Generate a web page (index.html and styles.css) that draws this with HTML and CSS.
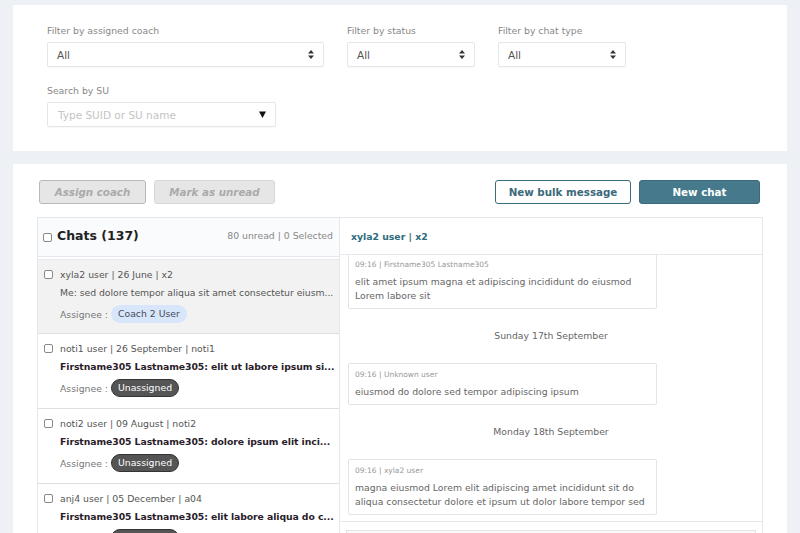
FILE: index.html
```html
<!DOCTYPE html>
<html lang="en">
<head>
    <meta charset="UTF-8">
    <title>Chats</title>
    <link rel="stylesheet" href="styles.css">
</head>
<body>
<div class="card filters">
    <div class="filter-row">
        <div class="field">
            <label>Filter by assigned coach</label>
            <div class="select wide"><span>All</span><svg class="updown" width="6" height="9" viewBox="0 0 6 9"><path d="M3 0L6 3.5H0Z M3 9L6 5.5H0Z" fill="#333"/></svg></div>
        </div>
        <div class="field">
            <label>Filter by status</label>
            <div class="select"><span>All</span><svg class="updown" width="6" height="9" viewBox="0 0 6 9"><path d="M3 0L6 3.5H0Z M3 9L6 5.5H0Z" fill="#333"/></svg></div>
        </div>
        <div class="field">
            <label>Filter by chat type</label>
            <div class="select"><span>All</span><svg class="updown" width="6" height="9" viewBox="0 0 6 9"><path d="M3 0L6 3.5H0Z M3 9L6 5.5H0Z" fill="#333"/></svg></div>
        </div>
    </div>
    <div class="filter-row">
        <div class="field">
            <label>Search by SU</label>
            <div class="select search"><span class="placeholder">Type SUID or SU name</span><svg width="7" height="7" viewBox="0 0 7 7"><path d="M0 0.5H7L3.5 7Z" fill="#111"/></svg></div>
        </div>
    </div>
</div>

<div class="card main">
    <div class="toolbar">
        <button class="btn disabled first">Assign coach</button>
        <button class="btn disabled">Mark as unread</button>
        <span class="spacer"></span>
        <button class="btn outline">New bulk message</button>
        <button class="btn primary">New chat</button>
    </div>

    <div class="chat-panel">
        <div class="chat-list">
            <div class="list-head">
                <span class="check"></span>
                <span class="title">Chats (137)</span>
                <span class="counts">80 unread | 0 Selected</span>
            </div>
            <div class="items">
                <div class="item active">
                    <div class="line"><span class="check"></span>xyla2 user | 26 June | x2</div>
                    <div class="preview">Me: sed dolore tempor aliqua sit amet consectetur eiusm...</div>
                    <div class="assignee">Assignee : <span class="tag coach">Coach 2 User</span></div>
                </div>
                <div class="item">
                    <div class="line"><span class="check"></span>noti1 user | 26 September | noti1</div>
                    <div class="preview unread">Firstname305 Lastname305: elit ut labore ipsum si...</div>
                    <div class="assignee">Assignee : <span class="tag none">Unassigned</span></div>
                </div>
                <div class="item">
                    <div class="line"><span class="check"></span>noti2 user | 09 August | noti2</div>
                    <div class="preview unread">Firstname305 Lastname305: dolore ipsum elit inci...</div>
                    <div class="assignee">Assignee : <span class="tag none">Unassigned</span></div>
                </div>
                <div class="item">
                    <div class="line"><span class="check"></span>anj4 user | 05 December | a04</div>
                    <div class="preview unread">Firstname305 Lastname305: elit labore aliqua do c...</div>
                    <div class="assignee">Assignee : <span class="tag none">Unassigned</span></div>
                </div>
            </div>
        </div>

        <div class="conversation">
            <div class="conv-head">xyla2 user | x2</div>
            <div class="messages">
                <div class="msg-list">
                    <div class="msg">
                        <div class="meta">09:16 | Firstname305 Lastname305</div>
                        <div class="text">elit amet ipsum magna et adipiscing incididunt do eiusmod Lorem labore sit</div>
                    </div>
                    <div class="day">Sunday 17th September</div>
                    <div class="msg">
                        <div class="meta">09:16 | Unknown user</div>
                        <div class="text">eiusmod do dolore sed tempor adipiscing ipsum</div>
                    </div>
                    <div class="day">Monday 18th September</div>
                    <div class="msg">
                        <div class="meta">09:16 | xyla2 user</div>
                        <div class="text">magna eiusmod Lorem elit adipiscing amet incididunt sit do aliqua consectetur dolore et ipsum ut dolor labore tempor sed</div>
                    </div>
                </div>
            </div>
            <div class="composer">
                <div class="composer-box"></div>
            </div>
        </div>
    </div>
</div>
</body>
</html>
```

FILE: styles.css
```css
* {
    margin: 0;
    padding: 0;
    box-sizing: border-box;
}

body {
    background: #edf1f6;
    font-family: "DejaVu Sans", Verdana, sans-serif;
    font-size: 9.3px;
    color: #555;
    padding: 5px 13px 0;
    height: 533px;
    overflow: hidden;
}

.card {
    background: #fff;
}

/* filters */
.filters {
    height: 146px;
    padding: 20px 34px 0;
}

.filter-row {
    display: flex;
    gap: 23px;
    margin-bottom: 18px;
}

.field label {
    display: block;
    color: #888;
    font-size: 9.3px;
    line-height: 12px;
    margin-bottom: 5px;
}

.select {
    width: 128px;
    height: 25px;
    border: 1px solid #e6e6e6;
    border-radius: 2px;
    display: flex;
    align-items: center;
    justify-content: space-between;
    padding: 0 9px 0 9px;
    font-size: 10.5px;
    color: #555;
    box-shadow: 0 1px 1px rgba(0, 0, 0, 0.03);
}

.select.wide {
    width: 277px;
}

.select.search {
    width: 229px;
    padding-left: 10px;
}

.placeholder {
    color: #c4c4c4;
}

/* main card */
.main {
    margin-top: 13px;
    height: 420px;
    padding: 16px 24px 0;
}

.toolbar {
    display: flex;
    gap: 8px;
    padding-left: 2px;
    margin-bottom: 13px;
}

.spacer {
    flex: 1;
}

.btn {
    height: 24px;
    font-family: "DejaVu Sans", Verdana, sans-serif;
    font-size: 10.3px;
    font-weight: bold;
    border-radius: 3px;
    padding: 0;
    white-space: nowrap;
}

.btn.disabled {
    background: #e6e6e6;
    border: 1px solid #d6d6d6;
    color: #aaa;
    font-style: italic;
    width: 121px;
}

.btn.disabled.first {
    border-color: #b9b9b9;
    width: 107px;
}

.btn.outline {
    background: #fff;
    border: 1px solid #3b6a7c;
    color: #3b6a7c;
    width: 136px;
}

.btn.primary {
    background: #46798b;
    border: 1px solid #3a6a7b;
    color: #fff;
    width: 121px;
    margin-right: 3px;
}

/* chat panel */
.chat-panel {
    display: flex;
    border: 1px solid #e4e7eb;
    height: 360px;
}

.chat-list {
    width: 302px;
    flex-shrink: 0;
    border-right: 1px solid #e4e7eb;
}

.list-head {
    height: 39px;
    background: #fafbfc;
    border-bottom: 1px solid #e4e7eb;
    display: flex;
    align-items: center;
    padding: 0 6px 0 5px;
}

.list-head .title {
    font-size: 12.5px;
    font-weight: bold;
    color: #222;
    margin-left: 5px;
    margin-top: -3px;
}

.list-head .counts {
    margin-left: auto;
    color: #888;
    margin-top: -3px;
}

.check {
    display: inline-block;
    width: 9px;
    height: 9px;
    border: 1px solid #888;
    border-radius: 2px;
    background: #fff;
    flex-shrink: 0;
}

.items {
    border-top: 1px solid #e4e7eb;
    margin-top: 2px;
}

.item {
    height: 75px;
    padding: 7px 4px 0 6px;
    border-bottom: 1px solid #dcdfe3;
    background: #fff;
}

.item.active {
    background: #f2f2f2;
    height: 74px;
}

.item .line {
    display: flex;
    align-items: center;
    height: 14px;
}

.item .line .check {
    margin-right: 7px;
}

.preview {
    margin: 5px 0 0 16px;
    white-space: nowrap;
    line-height: 14px;
    letter-spacing: -0.04px;
}

.preview.unread {
    font-weight: bold;
    color: #2a1c2a;
    letter-spacing: -0.08px;
}

.assignee {
    margin: 5px 0 0 16px;
    display: flex;
    align-items: center;
    gap: 3px;
    color: #777;
}

.tag {
    display: inline-block;
    height: 18px;
    line-height: 18px;
    border-radius: 9px;
    padding: 0 7px;
}

.tag.coach {
    background: #d8e6fb;
    color: #4a4a5a;
}

.tag.none {
    background: #555;
    color: #fff;
    border: 1px solid #333;
    line-height: 16px;
    padding: 0 6px;
}

/* conversation */
.conversation {
    flex: 1;
    display: flex;
    flex-direction: column;
}

.conv-head {
    height: 37px;
    flex-shrink: 0;
    border-bottom: 1px solid #e4e7eb;
    color: #2d6b7e;
    font-weight: bold;
    display: flex;
    align-items: center;
    padding-left: 11px;
}

.messages {
    height: 266px;
    flex-shrink: 0;
    overflow: hidden;
}

.msg-list {
    margin-top: -2px;
    padding: 0 0 0 8px;
}

.msg {
    width: 309px;
    border: 1px solid #e4e4e4;
    border-radius: 2px;
    padding: 4px 6px 5px;
    background: #fff;
}

.msg .meta {
    font-size: 7.5px;
    color: #999;
    line-height: 14px;
    margin-bottom: 3px;
}

.msg .text {
    color: #666;
    line-height: 14px;
}

.day {
    text-align: center;
    color: #666;
    height: 54px;
    line-height: 54px;
    margin-left: -8px;
}

.composer {
    flex-shrink: 0;
    border-top: 1px solid #e4e7eb;
    padding: 8px 6px 0;
}

.composer-box {
    height: 30px;
    border: 1px solid #e4e4e4;
    background: #fafafa;
}
```
